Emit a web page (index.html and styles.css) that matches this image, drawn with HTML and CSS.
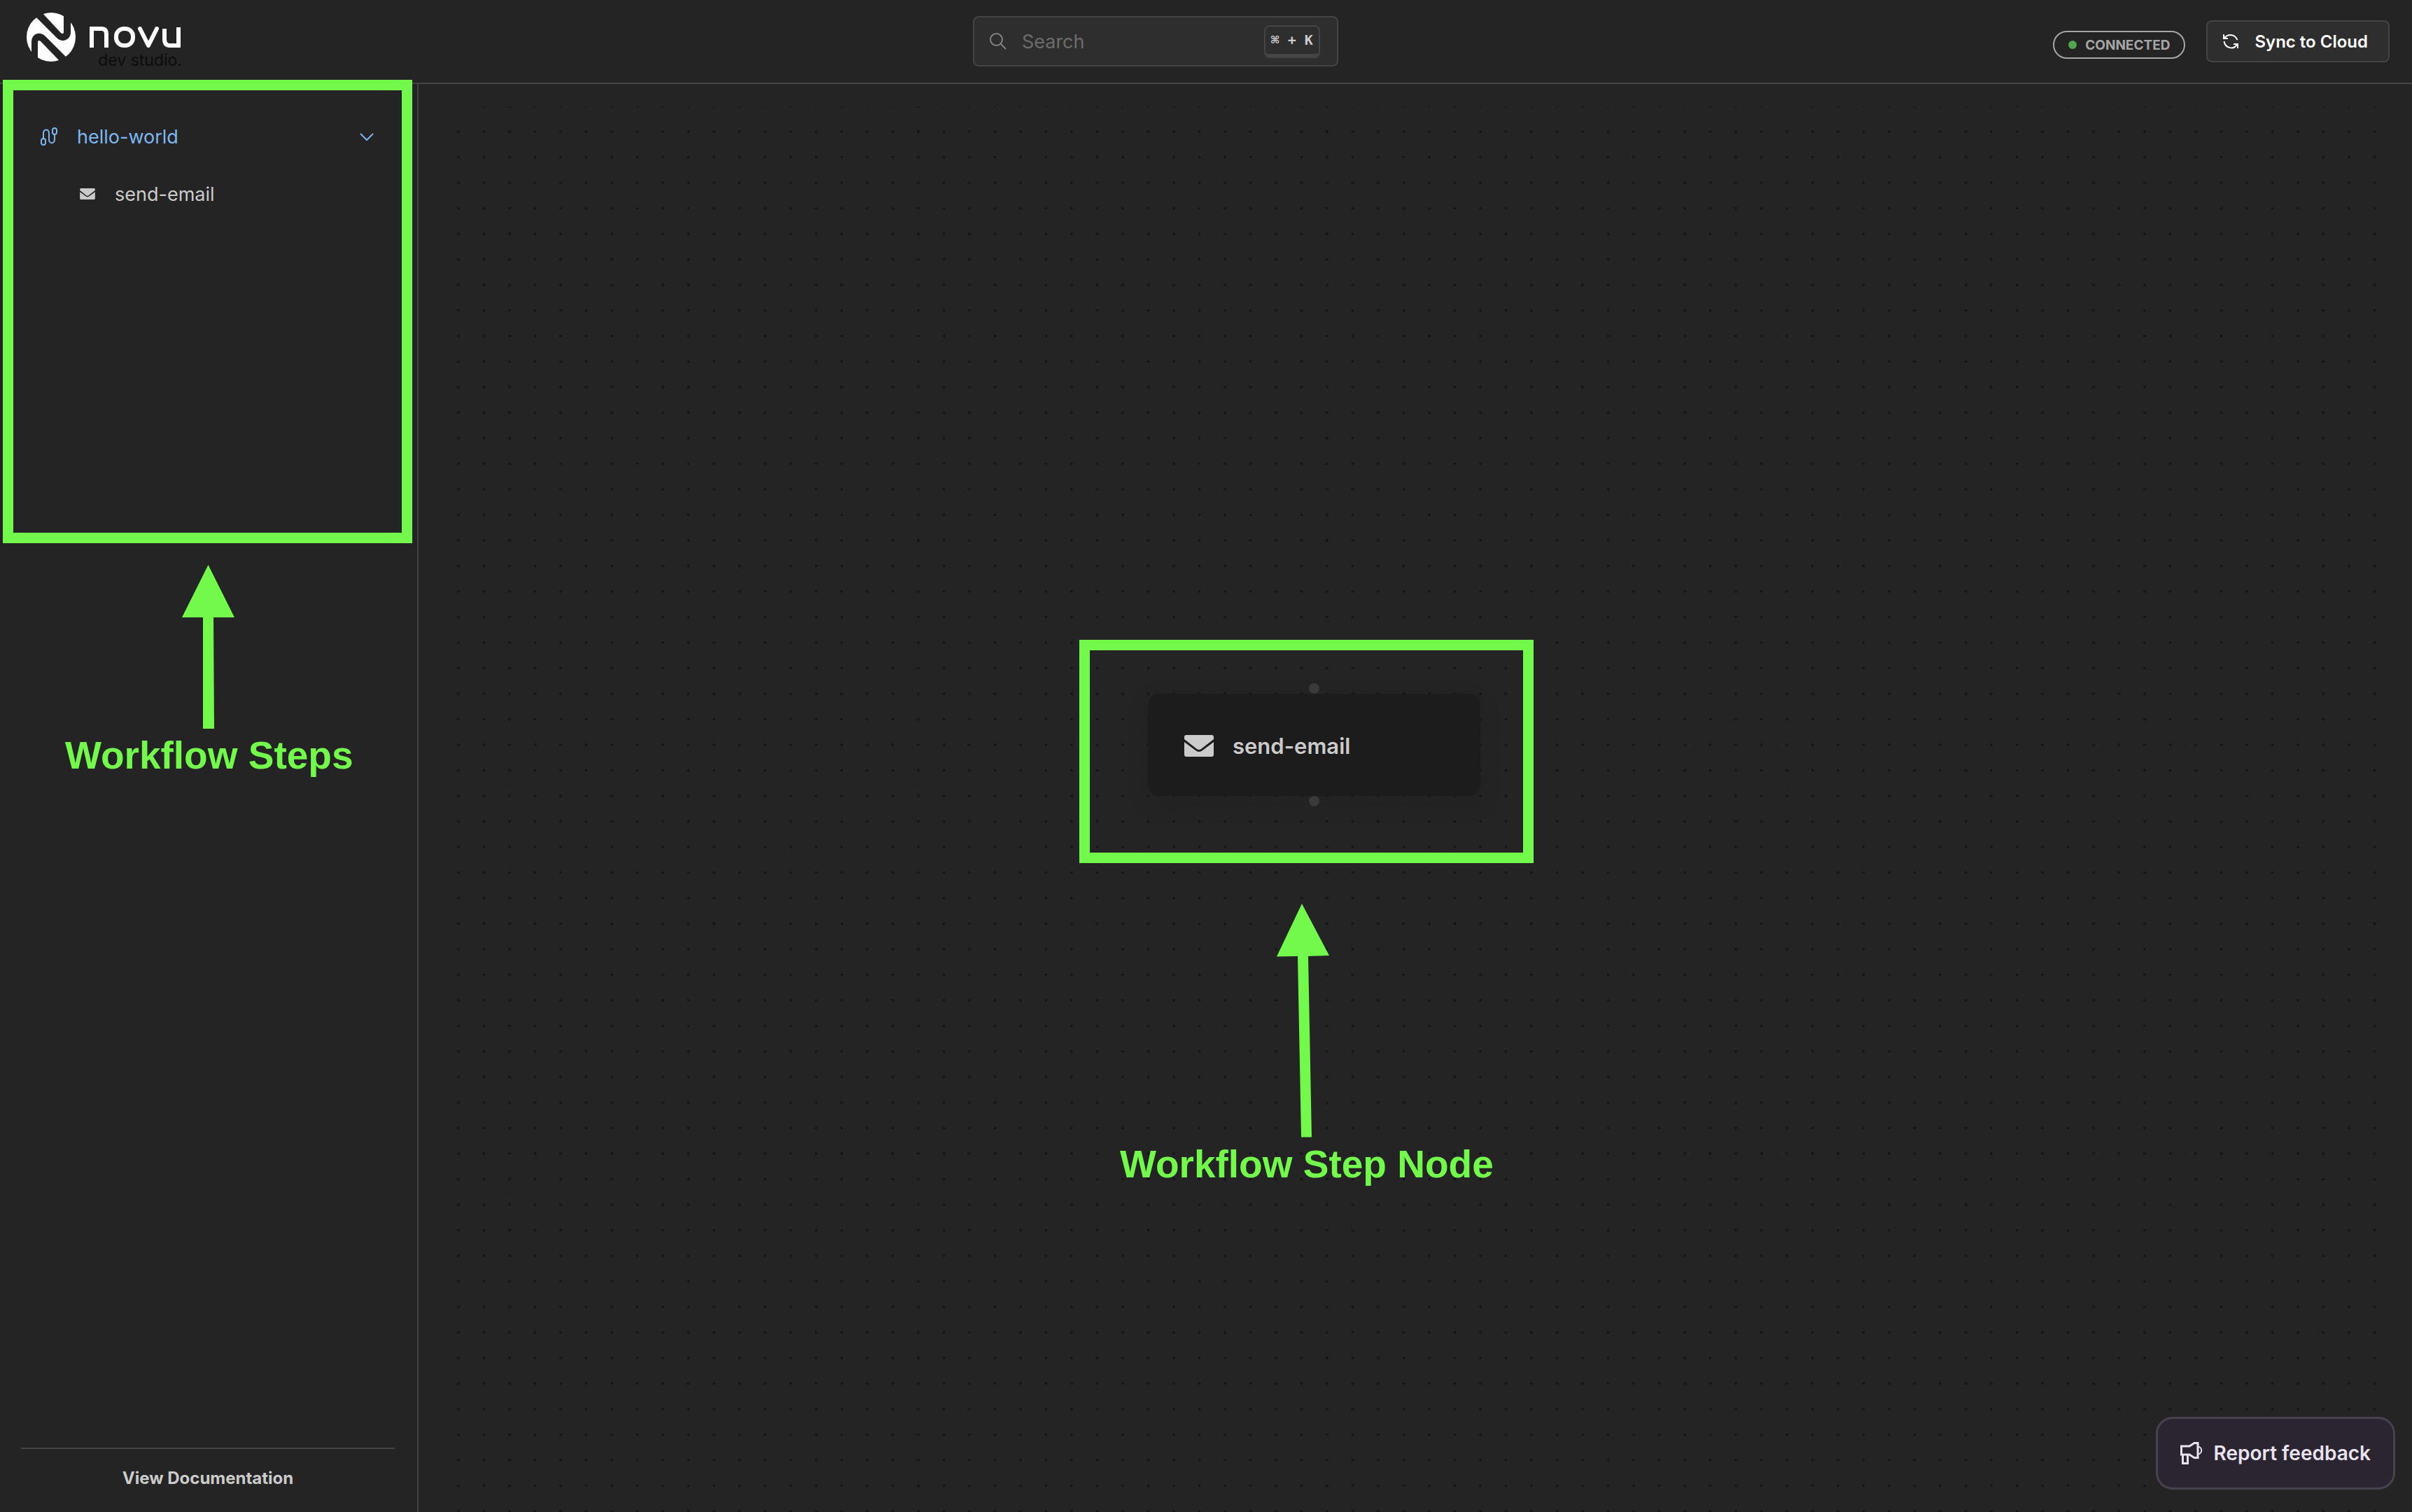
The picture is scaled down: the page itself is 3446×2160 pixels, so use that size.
FILE: index.html
```html
<!DOCTYPE html>
<html lang="en">
<head>
<meta charset="utf-8">
<title>Novu dev studio</title>
<link rel="stylesheet" href="styles.css">
</head>
<body>
<div class="app">
  <header class="topbar">
    <a class="brand" href="#" aria-label="novu dev studio">
      <svg class="brand-mark" viewBox="0 0 70 70" aria-hidden="true">
        <defs><clipPath id="disc"><circle cx="35" cy="35" r="35"/></clipPath></defs>
        <g clip-path="url(#disc)" fill="#fff">
          <path d="M22 0H53V28C53 30 51 31 49 29Z"/>
          <path d="M14 7L43 36C51 44 63 39 63 28V14L72 20V50L56 63L27 34C19 26 7 30 7 42V56L-2 50V20Z"/>
          <path d="M48 70H16V42C16 40 18 39 20 41Z"/>
        </g>
      </svg>
      <span class="brand-text">
        <svg class="brand-name" viewBox="0 0 132 30" aria-hidden="true">
          <g fill="none" stroke="#fff" stroke-width="6">
            <path d="M3 30V3H17Q24 3 24 11V30"/>
            <rect x="38" y="3" width="24" height="24" rx="11"/>
            <path d="M72 3L84 27L96 3" stroke-linecap="round" stroke-linejoin="round"/>
            <path d="M107 3V18Q107 27 115 27H127V1"/>
          </g>
        </svg>
        <span class="brand-sub">dev studio.</span>
      </span>
    </a>
    <div class="search">
      <svg class="search-icon" viewBox="0 0 24 24" aria-hidden="true"><g fill="none" stroke="#828282" stroke-width="2"><circle cx="9.500" cy="9.500" r="8.500"/><path d="M16 16L23 23"/></g></svg>
      <input class="search-input" type="search" placeholder="Search" aria-label="Search">
      <kbd class="kbd">⌘ + K</kbd>
    </div>
    <div class="actions">
      <span class="badge"><span class="badge-dot"></span>CONNECTED</span>
      <button class="sync" type="button">
        <svg class="sync-icon" viewBox="0 0 22 22" aria-hidden="true"><g fill="none" stroke="#fff" stroke-width="2"><path d="M1 1V7H7M2 7C5 1 16 -1 20.500 9"/><path d="M21 21V15H15M1.500 11C3 21 16 24 20 15"/></g><path d="M0 2V8H6ZM22 20V14H16Z" fill="#fff"/></svg>
        Sync to Cloud
      </button>
    </div>
  </header>
  <div class="body">
    <aside class="sidebar">
      <nav class="steps">
        <a class="step step-active" href="#">
          <svg class="route-icon" viewBox="0 0 24 26" aria-hidden="true"><g fill="none" stroke="#7eb6f2" stroke-width="2"><rect x="1" y="16" width="6" height="9" rx="3"/><rect x="17" y="1" width="6" height="9" rx="3"/><path d="M4 16V8C4 2 12 2 12 8V17C12 24 20 24 20 17V10"/></g></svg>
          <span class="step-label">hello-world</span>
          <svg class="chevron" viewBox="0 0 20 11" aria-hidden="true"><path d="M1 1L10 10L19 1" fill="none" stroke="#7eb6f2" stroke-width="2"/></svg>
        </a>
        <a class="step step-child" href="#">
          <svg class="mail-small" viewBox="0 0 42 31" aria-hidden="true"><path d="M3 0H39Q42 0 42 3V6L24 20Q21 22 18 20L0 6V3Q0 0 3 0ZM0 10L16 22Q21 26 26 22L42 10V28Q42 31 39 31H3Q0 31 0 28Z" fill="#cbcbcb"/></svg>
          <span class="step-label">send-email</span>
        </a>
      </nav>
      <footer class="sidebar-foot"><a class="docs" href="#">View Documentation</a></footer>
      <div class="frame frame-steps"></div>
      <svg class="arrow arrow-steps" viewBox="0 0 76 234" aria-hidden="true"><path d="M37.500 0L75 75L45 75L46 234H30L30 75H0Z" fill="#72f94b"/></svg>
      <p class="note note-steps">Workflow Steps</p>
    </aside>
    <main class="canvas">
      <div class="flow">
        <svg class="dots" aria-hidden="true">
          <defs><pattern id="grid" x="6" y="17" width="73" height="73" patternUnits="userSpaceOnUse"><g fill="#14141c"><circle cx="19" cy="19" r="2"/><circle cx="55.500" cy="19" r="2"/><circle cx="19" cy="55.500" r="2"/><circle cx="55.500" cy="55.500" r="2"/></g></pattern></defs>
          <rect width="100%" height="100%" fill="url(#grid)"/>
        </svg>
      </div>
      <div class="frame frame-node"></div>
      <div class="node">
        <span class="handle handle-top"></span>
        <svg class="mail-large" viewBox="0 0 42 31" aria-hidden="true"><path d="M3 0H39Q42 0 42 3V6L24 20Q21 22 18 20L0 6V3Q0 0 3 0ZM0 10L16 22Q21 26 26 22L42 10V28Q42 31 39 31H3Q0 31 0 28Z" fill="#cbcbcb"/></svg>
        <span class="node-label">send-email</span>
        <span class="handle handle-bottom"></span>
      </div>
      <svg class="arrow arrow-node" viewBox="0 0 76 334" aria-hidden="true"><path d="M36 0L75 74L45 75L50 333.500H35L30 75L0 75.500Z" fill="#72f94b"/></svg>
      <p class="note note-node">Workflow Step Node</p>
      <button class="feedback" type="button">
        <svg class="horn" viewBox="0 0 32 32" aria-hidden="true"><g fill="none" stroke="#e9e2ef" stroke-width="3"><path d="M1.500 6H13L20 1.500H25V22.500H20L13 18H1.500Z"/><path d="M3.500 18V30.500H10.500V18"/><path d="M25 6.500C32 7 32 17 25 17.500" stroke-width="2"/></g></svg>
        Report feedback
      </button>
    </main>
  </div>
</div>
</body>
</html>
```
FILE: styles.css
```css
* { box-sizing: border-box; }
body {
  margin: 0;
  background: #242424;
  color: #cbcbcb;
  font-family: Inter, "Liberation Sans", sans-serif;
}
a { color: inherit; text-decoration: none; }
button { font-family: inherit; cursor: pointer; }
svg { display: block; flex: none; }

.app { display: flex; flex-direction: column; height: 100vh; overflow: hidden; }

.topbar {
  display: grid;
  grid-template-columns: 9fr 522px 10fr;
  align-items: center;
  height: 120px;
  padding: 0 32px 0 38px;
  border-bottom: 2px solid #444;
}
.brand { display: flex; gap: 20px; align-self: start; padding-top: 18px; }
.brand-mark { width: 70px; height: 70px; }
.brand-text { display: flex; flex-direction: column; align-items: flex-end; padding-top: 20px; }
.brand-name { width: 132px; height: 30px; }
.brand-sub { color: #0c0c0c; font-size: 23px; line-height: 36px; }

.search {
  display: flex;
  align-items: center;
  height: 72px;
  padding: 0 24px 0 22px;
  border: 2px solid #444;
  border-radius: 8px;
  background: #2e2e2e;
}
.search-icon { width: 24px; height: 24px; }
.search-input {
  flex: 1;
  min-width: 0;
  margin-left: 22px;
  padding: 0;
  border: 0;
  outline: 0;
  background: none;
  color: #cbcbcb;
  font-family: inherit;
  font-size: 27px;
}
.search-input::placeholder { color: #6c6c6c; opacity: 1; }
.kbd {
  padding: 0 8px;
  border: 2px solid #444;
  border-bottom-width: 6px;
  border-radius: 8px;
  font-family: "DejaVu Sans Mono", monospace;
  font-size: 20px;
  font-weight: 700;
  line-height: 39px;
}

.actions { display: flex; justify-content: flex-end; align-items: baseline; gap: 30px; }
.badge {
  display: flex;
  align-items: center;
  gap: 12px;
  height: 40px;
  padding: 0 20px;
  border: 2px solid #a6a6a6;
  border-radius: 20px;
  color: #a6a6a6;
  font-size: 19px;
  font-weight: 700;
}
.badge-dot { width: 12px; height: 12px; border-radius: 50%; background: #51a551; }
.sync {
  display: flex;
  align-items: center;
  gap: 23px;
  height: 60px;
  padding: 0 29px 0 22px;
  border: 2px solid #444;
  border-radius: 8px;
  background: #2e2e2e;
  color: #fff;
  font-size: 24px;
  font-weight: 600;
}
.sync-icon { width: 22px; height: 22px; }

.body { display: flex; flex: 1; min-height: 0; }
.sidebar {
  position: relative;
  display: flex;
  flex-direction: column;
  justify-content: space-between;
  width: 598px;
  flex: none;
  border-right: 2px solid #444;
}
.steps { padding: 34px 62px 0 58px; }
.step { display: flex; align-items: center; height: 82px; font-size: 27px; }
.step-active { color: #7eb6f2; }
.step-active .step-label { flex: 1; }
.step-child { padding-left: 56px; }
.step-label { margin-left: 28px; }
.route-icon { width: 24px; height: 26px; }
.chevron { width: 20px; height: 11px; }
.mail-small { width: 22px; height: 16px; }
.sidebar-foot {
  margin: 0 32px 0 30px;
  border-top: 2px solid #444;
  text-align: center;
}
.docs { display: block; font-size: 24px; font-weight: 700; line-height: 30px; padding: 27px 0 33px; }

.canvas { position: relative; flex: 1; padding: 32px 32px 0; }
.flow { height: 100%; }
.dots { width: 100%; height: 100%; }

.node {
  position: absolute;
  left: 1042px;
  top: 871px;
  display: flex;
  align-items: center;
  gap: 27px;
  width: 475px;
  height: 146px;
  padding: 2px 52px 0;
  border-radius: 16px;
  background: rgba(28, 28, 28, .9);
  box-shadow: 0 10px 30px rgba(28, 28, 28, .2);
}
.mail-large { width: 42px; height: 31px; }
.node-label { font-size: 31px; font-weight: 600; }
.handle {
  position: absolute;
  left: 230px;
  width: 15px;
  height: 15px;
  border-radius: 50%;
  background: #3a3a3a;
}
.handle-top { top: -15px; }
.handle-bottom { bottom: -15px; }

/* Callouts laid over the app */
.frame { position: absolute; border: 15px solid #72f94b; pointer-events: none; }
.frame-steps { left: 4px; top: -6px; width: 585px; height: 662px; }
.frame-node { left: 944px; top: 794px; width: 649px; height: 319px; }
.arrow { position: absolute; width: 76px; }
.arrow-steps { left: 260px; top: 687px; height: 234px; }
.arrow-node { left: 1226px; top: 1171px; height: 334px; }
.note {
  position: absolute;
  margin: 0;
  color: #72f94b;
  font-family: "Liberation Sans", sans-serif;
  font-size: 55px;
  font-weight: 700;
  line-height: 64px;
  white-space: nowrap;
}
.note-steps { left: 93px; top: 927px; }
.note-node { left: 1002px; top: 1511px; }

.feedback {
  position: absolute;
  right: 24px;
  bottom: 32px;
  display: flex;
  align-items: center;
  gap: 16px;
  height: 104px;
  padding: 0 32px;
  border: 3px solid #48414e;
  border-radius: 24px;
  background: #2a2530;
  color: #e9e2ef;
  font-size: 28px;
  font-weight: 600;
}
.horn { width: 32px; height: 32px; }
```
